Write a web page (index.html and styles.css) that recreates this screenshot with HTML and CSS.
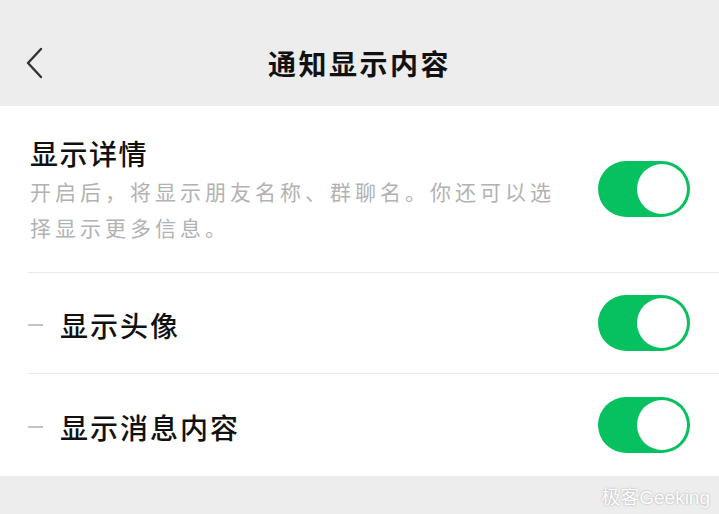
FILE: index.html
```html
<!DOCTYPE html>
<html>
<head>
  <title>通知显示内容</title>
  <meta charset="utf-8">
  <link rel="stylesheet" href="styles.css">
</head>
<body>

  <!-- Navigation Bar -->
  <div class="nav-bar">
    <span class="back-btn">
      <svg width="20" height="32" viewBox="0 0 20 32">
        <path d="M17 2 L4 16 L17 30" fill="none" stroke="#333" stroke-width="2.4" stroke-linecap="round" stroke-linejoin="round"/>
      </svg>
    </span>
    <h1 class="nav-title">通知显示内容</h1>
  </div>

  <!-- Settings List -->
  <div class="settings">
    <div class="row row-main">
      <div class="row-text">
        <div class="row-title">显示详情</div>
        <div class="row-desc">开启后，将显示朋友名称、群聊名。你还可以选择显示更多信息。</div>
      </div>
      <span class="switch on"><span class="knob"></span></span>
    </div>

    <div class="row row-sub">
      <div class="row-label"><span class="dash"></span>显示头像</div>
      <span class="switch on"><span class="knob"></span></span>
    </div>

    <div class="row row-sub last">
      <div class="row-label"><span class="dash"></span>显示消息内容</div>
      <span class="switch on"><span class="knob"></span></span>
    </div>
  </div>

  <div class="footer">
    <span class="watermark">极客Geeking</span>
  </div>

</body>
</html>
```

FILE: styles.css
```css
/* General Page Styling */
body {
  font-family: "Noto Sans CJK SC", "Noto Sans", sans-serif;
  background-color: #ededed;
  margin: 0;
  color: #111;
}

/* Navigation Bar */
.nav-bar {
  height: 106px;
  display: flex;
  align-items: center;
  justify-content: center;
  position: relative;
}

.back-btn {
  position: absolute;
  left: 24px;
  top: 47px;
  display: flex;
}

.nav-title {
  margin: 0;
  padding-top: 20px;
  font-size: 28px;
  font-weight: 700;
  letter-spacing: 2.5px;
  color: #111;
}

/* Settings List */
.settings {
  background-color: #fff;
}

.row {
  display: flex;
  align-items: center;
  justify-content: space-between;
  margin-left: 28px;
  padding-right: 29px;
  border-bottom: 1px solid #e9e9e9;
  box-sizing: border-box;
}

.row.last {
  border-bottom: none;
  height: 102px;
}

.row-main {
  height: 167px;
  padding-left: 2px;
}

.row-sub {
  height: 101px;
}

.row-title {
  font-size: 28px;
  font-weight: 500;
  line-height: 40px;
  letter-spacing: 1.5px;
}

.row-desc {
  width: 530px;
  font-size: 21px;
  line-height: 36px;
  letter-spacing: 4px;
  color: #b2b2b2;
}

.row-label {
  display: flex;
  align-items: center;
  font-size: 28px;
  font-weight: 500;
  letter-spacing: 2px;
  padding-top: 3px;
}

.dash {
  width: 15px;
  height: 2px;
  background-color: #c4c4c4;
  margin-right: 17px;
}

/* Toggle Switch */
.switch {
  width: 92px;
  height: 56px;
  border-radius: 28px;
  background-color: #07c160;
  display: flex;
  align-items: center;
  justify-content: flex-end;
  padding: 0 3px;
  box-sizing: border-box;
  flex-shrink: 0;
}

.knob {
  width: 50px;
  height: 50px;
  border-radius: 50%;
  background-color: #fff;
}

/* Footer */
.footer {
  height: 38px;
  display: flex;
  align-items: center;
  justify-content: flex-end;
  padding-right: 9px;
}

.watermark {
  font-family: "Liberation Sans", "Noto Sans CJK SC", sans-serif;
  font-size: 19px;
  color: #fff;
  text-shadow: 0 0 2px rgba(0, 0, 0, 0.35);
}
```
